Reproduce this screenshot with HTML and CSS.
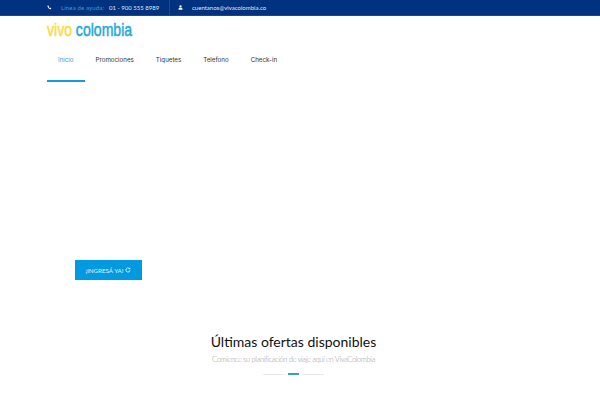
FILE: index.html
```html
<!DOCTYPE html>
<html lang="es">
<head>
<meta charset="utf-8">
<title>Viva Colombia</title>
<link rel="stylesheet" href="styles.css">
</head>
<body>
<div class="topbar">
  <div class="topbar-left">
    <svg class="ico" viewBox="0 0 10 10"><path d="M1.5 1.2 3 .8l1.2 2-1 .9c.4 1 1.2 1.9 2.3 2.4l1-1 2 1.3-.5 1.6c-.3.6-1 .7-1.7.5C3.800 7.300 1.800 5.200 1 2.800c-.2-.7 0-1.300.5-1.600z" fill="#fff"/></svg>
    <span class="help">Línea de ayuda:</span>
    <span class="phone">01 - 900 555 8989</span>
  </div>
  <div class="topbar-right">
    <svg class="ico" viewBox="0 0 10 10"><circle cx="5" cy="2.800" r="2.300" fill="#fff"/><path d="M1.200 9.500V7.500C1.200 6 2.300 5.300 3.200 5.300h3.600c.9 0 2 .7 2 2.200v2z" fill="#fff"/></svg>
    <span class="mail">cuentanos@vivacolombia.co</span>
  </div>
</div>
<header class="header">
  <div class="logo"><span class="logo-a">vivo</span><span class="logo-b">colombia</span></div>
  <nav class="nav">
    <a class="nav-item active">Inicio</a>
    <a class="nav-item">Promociones</a>
    <a class="nav-item">Tiquetes</a>
    <a class="nav-item">Telefono</a>
    <a class="nav-item">Check-in</a>
  </nav>
</header>
<section class="hero">
  <a class="cta">¡INGRESÁ YA!
    <svg class="cta-ico" viewBox="0 0 10 10"><path d="M8.300 5.500A3.400 3.400 0 1 1 7.300 2.500" fill="none" stroke="#fff" stroke-width="1.300"/><path d="M8.800.8v3H5.800z" fill="#fff"/></svg>
  </a>
</section>
<section class="offers">
  <h2 class="title">Últimas ofertas disponibles</h2>
  <p class="sub">Comience su planificación de viaje aquí en VivaColombia</p>
  <div class="divider"><span class="line"></span><span class="mark"></span><span class="line"></span></div>
</section>
</body>
</html>
```
FILE: styles.css
```css
* { box-sizing: border-box; }
html, body { margin: 0; padding: 0; }
body { width: 600px; height: 400px; overflow: hidden; background: #fff; font-family: "Lato", "Liberation Sans", sans-serif; color: #333; }

.topbar { height: 16px; background: #00327f; border-bottom: 1px solid #0a4aa0; display: flex; align-items: center; padding-left: 47px; font-size: 6px; color: #dfe9f5; }
.topbar-left { display: flex; align-items: center; height: 15px; padding-right: 10px; border-right: 1px solid #1a4a90; }
.topbar-right { display: flex; align-items: center; padding-left: 8px; }
.ico { width: 5px; height: 5px; display: block; }
.help { color: #3d9be0; margin-left: 9px; width: 42px; white-space: nowrap; letter-spacing: .15px; }
.phone { margin-left: 6px; width: 50px; white-space: nowrap; }
.mail { margin-left: 9px; white-space: nowrap; }

.header { padding-left: 47px; }
.logo { height: 21px; margin-top: 4px; line-height: 20px; font-family: "Liberation Sans", sans-serif; font-size: 18px; white-space: nowrap; display: flex; gap: 5px; -webkit-text-stroke: .5px; transform: scaleX(.78); transform-origin: left center; }
.logo-a { color: #fbdc3c; }
.logo-b { color: #1fa9dc; }

.nav { display: flex; height: 41px; }
.nav-item { padding: 15px 11px 0; font-family: "Inter", sans-serif; font-size: 6.200px; color: #333; white-space: nowrap; }
.nav-item.active { color: #2f9fd8; border-bottom: 2px solid #159bd6; }

.hero { height: 250px; padding: 178px 0 0 75px; }
.cta { width: 67px; height: 20px; background: #019ae0; color: #e3f3fb; display: flex; align-items: center; justify-content: center; gap: 2px; font-size: 6.200px; white-space: nowrap; }
.cta-ico { width: 6px; height: 6px; }

.offers { width: 587px; text-align: center; }
.title { margin: 0; font-size: 14px; line-height: 20px; font-weight: 400; color: #111; white-space: nowrap; }
.sub { margin: 3px 0 0; font-size: 7.500px; line-height: 10px; font-weight: 300; letter-spacing: -.35px; color: #999; white-space: nowrap; }
.divider { display: flex; justify-content: center; align-items: center; margin-top: 8px; height: 2px; gap: 3px; }
.line { width: 22px; height: 1px; background: #e8e8e8; }
.mark { width: 11px; height: 2px; background: #3a9fc8; }
```
